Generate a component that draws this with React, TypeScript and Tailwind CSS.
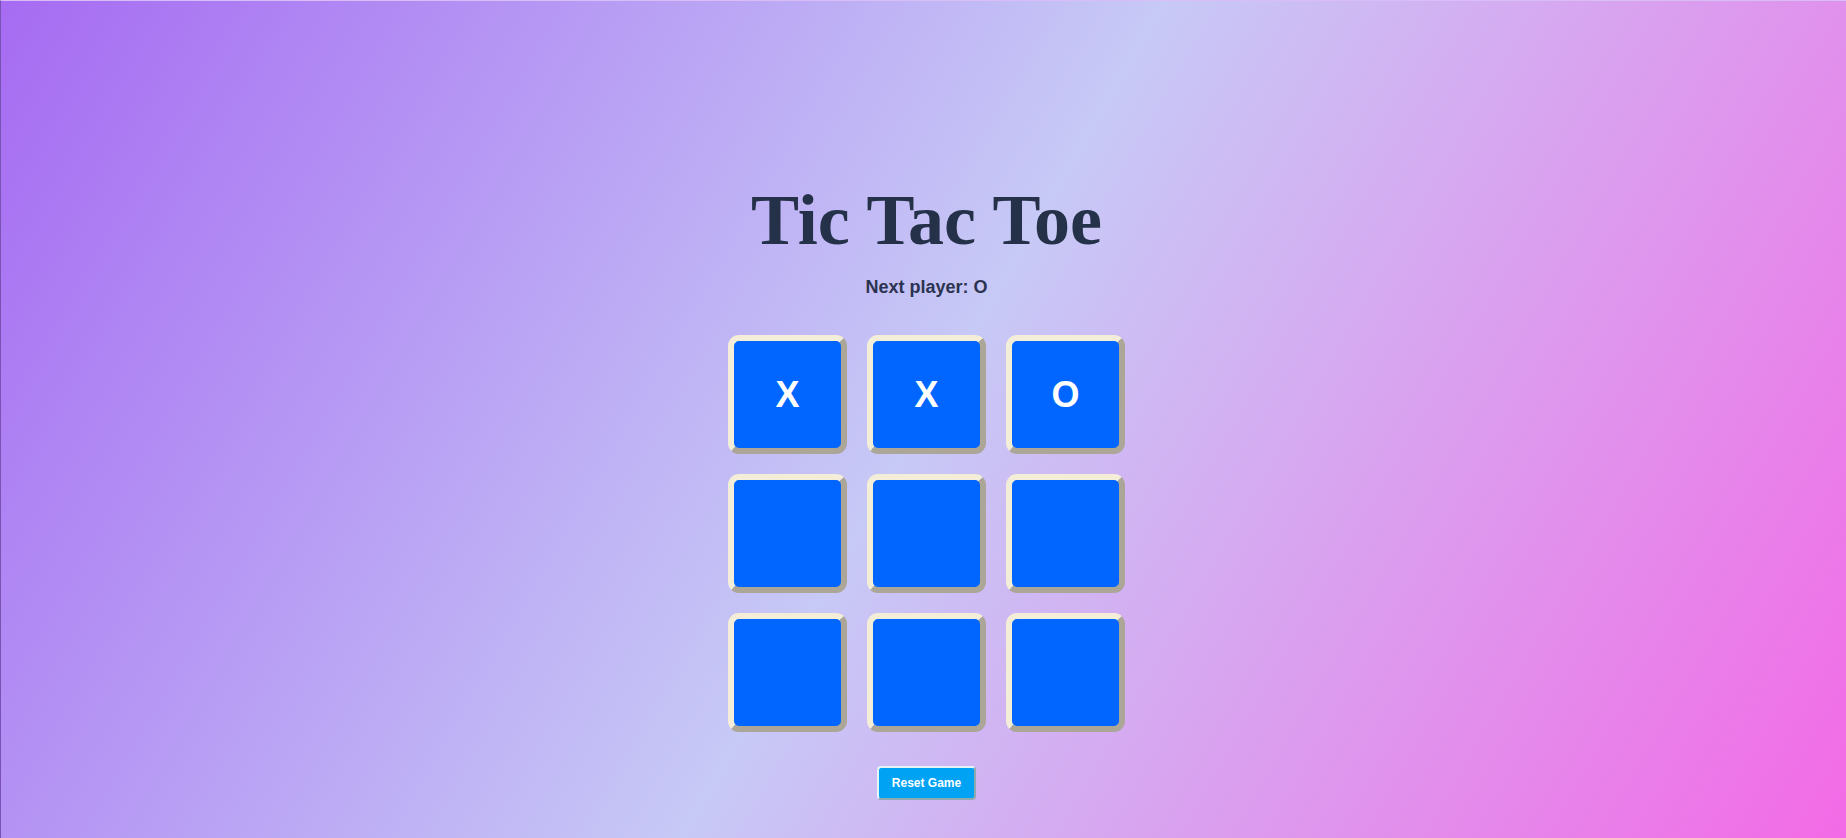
import React, { useState } from 'react';

type Cell = 'X' | 'O' | null;

const Square: React.FC<{ value: Cell; onClick: () => void }> = ({ value, onClick }) => (
  <button
    onClick={onClick}
    className="w-[119px] h-[119px] rounded-[11px] border-[6px] border-t-[#f4eed9] border-l-[#f4eed9] border-b-[#aba697] border-r-[#aba697] bg-[#0066ff] flex items-center justify-center text-[36px] leading-none font-bold text-white font-['Liberation_Sans',Arial,sans-serif]"
  >
    {value}
  </button>
);

const App: React.FC = () => {
  const [board, setBoard] = useState<Cell[]>(['X', 'X', 'O', null, null, null, null, null, null]);
  const [xNext, setXNext] = useState(false);

  const handleClick = (i: number) => {
    if (board[i]) return;
    const next = board.slice();
    next[i] = xNext ? 'X' : 'O';
    setBoard(next);
    setXNext(!xNext);
  };

  const reset = () => {
    setBoard(Array(9).fill(null));
    setXNext(true);
  };

  return (
    <div className="min-h-screen w-full border-l border-l-[#7a52b4] border-t border-t-[#d9bdf7] bg-[linear-gradient(120deg,#a66bf2_0%,#c7c9f6_50%,#f36ae6_100%)] flex flex-col items-center pl-[6px] pt-[183px] pb-[38px]">
      <h1 className="text-[72px] leading-none font-bold text-[#243149] font-['Liberation_Serif','Times_New_Roman',serif]">
        Tic Tac Toe
      </h1>
      <p className="mt-[17px] text-lg font-bold text-[#2b3350] font-['Liberation_Sans',Arial,sans-serif]">
        Next player: {xNext ? 'X' : 'O'}
      </p>
      <div className="mt-[34px] grid grid-cols-3 gap-5">
        {board.map((v, i) => (
          <Square key={i} value={v} onClick={() => handleClick(i)} />
        ))}
      </div>
      <button
        onClick={reset}
        className="mt-[34px] rounded-[4px] border-2 border-t-[#e3f3f8] border-l-[#e3f3f8] border-b-[#8fa9b0] border-r-[#8fa9b0] bg-[#00a2f4] px-[13px] py-[7px] text-xs font-bold text-white font-['Liberation_Sans',Arial,sans-serif]"
      >
        Reset Game
      </button>
    </div>
  );
};

export default App;
